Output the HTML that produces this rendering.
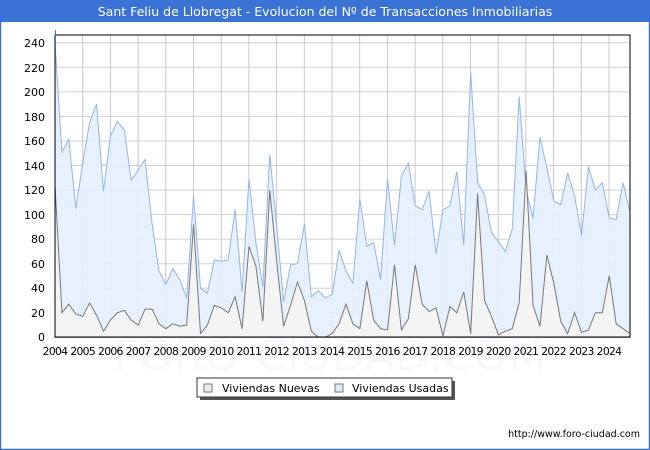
<!DOCTYPE html>
<html><head><meta charset="utf-8"><style>
body{margin:0;width:650px;height:450px;overflow:hidden;background:#fff;font-family:"DejaVu Sans","Liberation Sans",sans-serif}
</style></head><body>
<svg width="650" height="450" xmlns="http://www.w3.org/2000/svg" style="position:absolute;left:0;top:0">
<rect x="0" y="0" width="650" height="450" fill="#fff"/>
<rect x="0.5" y="0.5" width="649" height="449" fill="none" stroke="#3a6fd0" stroke-width="1.5"/>
<rect x="0" y="0" width="650" height="22" fill="#3a72d6"/>
<text x="325" y="16" text-anchor="middle" font-size="12.5" fill="#fff" font-family="DejaVu Sans, Liberation Sans, sans-serif">Sant Feliu de Llobregat - Evolucion del Nº de Transacciones Inmobiliarias</text>
<text x="330" y="370" text-anchor="middle" font-size="44" fill="#f6f8fc" font-family="DejaVu Sans, sans-serif">FORO-CIUDAD.COM</text>
<g stroke="#d0d0d0" stroke-width="1">
<line x1="55" x2="630" y1="312.8" y2="312.8"/><line x1="55" x2="630" y1="288.2" y2="288.2"/><line x1="55" x2="630" y1="263.7" y2="263.7"/><line x1="55" x2="630" y1="239.1" y2="239.1"/><line x1="55" x2="630" y1="214.6" y2="214.6"/><line x1="55" x2="630" y1="190.1" y2="190.1"/><line x1="55" x2="630" y1="165.5" y2="165.5"/><line x1="55" x2="630" y1="141" y2="141"/><line x1="55" x2="630" y1="116.4" y2="116.4"/><line x1="55" x2="630" y1="91.9" y2="91.9"/><line x1="55" x2="630" y1="67.3" y2="67.3"/><line x1="55" x2="630" y1="42.8" y2="42.8"/>
</g>
<g stroke="#c8c8c8" stroke-width="1">
<line x1="82.7" x2="82.7" y1="35" y2="337"/><line x1="110.4" x2="110.4" y1="35" y2="337"/><line x1="138.1" x2="138.1" y1="35" y2="337"/><line x1="165.8" x2="165.8" y1="35" y2="337"/><line x1="193.5" x2="193.5" y1="35" y2="337"/><line x1="221.2" x2="221.2" y1="35" y2="337"/><line x1="248.9" x2="248.9" y1="35" y2="337"/><line x1="276.6" x2="276.6" y1="35" y2="337"/><line x1="304.3" x2="304.3" y1="35" y2="337"/><line x1="332" x2="332" y1="35" y2="337"/><line x1="359.7" x2="359.7" y1="35" y2="337"/><line x1="387.4" x2="387.4" y1="35" y2="337"/><line x1="415.1" x2="415.1" y1="35" y2="337"/><line x1="442.8" x2="442.8" y1="35" y2="337"/><line x1="470.5" x2="470.5" y1="35" y2="337"/><line x1="498.2" x2="498.2" y1="35" y2="337"/><line x1="525.9" x2="525.9" y1="35" y2="337"/><line x1="553.6" x2="553.6" y1="35" y2="337"/><line x1="581.3" x2="581.3" y1="35" y2="337"/><line x1="609" x2="609" y1="35" y2="337"/>
</g>
<g transform="translate(55,337.3) scale(6.928,-1.2275)">
<polygon fill="#e3f0fd" fill-opacity="0.9" stroke="#94b4e8" stroke-width="1" vector-effect="non-scaling-stroke" points="0,0 0,240 1,151 2,161 3,105 4,142 5,175 6,190 7,119 8,164 9,176 10,169 11,128 12,136 13,145 14,93 15,54 16,43 17,56 18,47 19,32 20,115 21,40 22,36 23,63 24,62 25,63 26,104 27,37 28,129 29,77 30,41 31,149 32,90 33,29 34,59 35,60 36,92 37,33 38,38 39,32 40,35 41,71 42,54 43,44 44,113 45,74 46,77 47,47 48,129 49,75 50,131 51,142 52,107 53,104 54,119 55,68 56,104 57,107 58,135 59,75 60,216 61,126 62,116 63,85 64,78 65,70 66,88 67,196 68,120 69,97 70,163 71,138 72,111 73,108 74,134 75,115 76,83 77,139 78,120 79,126 80,97 81,96 82,126 83,102 83,0"/>
<polygon fill="#f4f4f4" stroke="#777" stroke-width="1" vector-effect="non-scaling-stroke" points="0,0 0,124 1,20 2,27 3,19 4,17 5,28 6,18 7,5 8,14 9,20 10,22 11,14 12,10 13,23 14,23 15,11 16,7 17,11 18,9 19,10 20,92 21,3 22,10 23,26 24,24 25,20 26,33 27,7 28,74 29,58 30,13 31,120 32,62 33,9 34,26 35,45 36,30 37,5 38,0 39,0 40,3 41,11 42,27 43,11 44,7 45,46 46,14 47,7 48,6 49,59 50,6 51,15 52,59 53,27 54,21 55,24 56,1 57,25 58,20 59,37 60,3 61,117 62,30 63,17 64,2 65,5 66,7 67,28 68,136 69,26 70,9 71,67 72,44 73,13 74,3 75,20 76,4 77,6 78,20 79,20 80,50 81,11 82,7 83,3 83,0"/>
</g>
<rect x="55" y="35" width="575" height="302" fill="none" stroke="#000" stroke-width="1"/>
<line x1="55.5" y1="30" x2="55.5" y2="45" stroke="#3a72d6" stroke-width="1"/>
<g font-size="11" fill="#000" text-anchor="end" font-family="DejaVu Sans, Liberation Sans, sans-serif">
<text x="45" y="341">0</text><text x="45" y="317">20</text><text x="45" y="292">40</text><text x="45" y="268">60</text><text x="45" y="243">80</text><text x="45" y="219">100</text><text x="45" y="194">120</text><text x="45" y="170">140</text><text x="45" y="145">160</text><text x="45" y="121">180</text><text x="45" y="96">200</text><text x="45" y="72">220</text><text x="45" y="47">240</text>
</g>
<g font-size="10.8" fill="#000" text-anchor="middle" font-family="DejaVu Sans, Liberation Sans, sans-serif" letter-spacing="-0.7">
<text x="55" y="355">2004</text><text x="82.7" y="355">2005</text><text x="110.4" y="355">2006</text><text x="138.1" y="355">2007</text><text x="165.8" y="355">2008</text><text x="193.5" y="355">2009</text><text x="221.2" y="355">2010</text><text x="248.9" y="355">2011</text><text x="276.6" y="355">2012</text><text x="304.3" y="355">2013</text><text x="332" y="355">2014</text><text x="359.7" y="355">2015</text><text x="387.4" y="355">2016</text><text x="415.1" y="355">2017</text><text x="442.8" y="355">2018</text><text x="470.5" y="355">2019</text><text x="498.2" y="355">2020</text><text x="525.9" y="355">2021</text><text x="553.6" y="355">2022</text><text x="581.3" y="355">2023</text><text x="609" y="355">2024</text>
</g>
<rect x="200" y="381" width="255" height="19" fill="#555"/>
<rect x="197" y="378" width="255" height="19" fill="#fff" stroke="#333" stroke-width="1"/>
<rect x="204" y="384" width="8" height="8" fill="#eee" stroke="#777"/>
<text x="222" y="392" font-size="11" fill="#000">Viviendas Nuevas</text>
<rect x="335" y="384" width="8" height="8" fill="#dceefe" stroke="#777"/>
<text x="352" y="392" font-size="11" fill="#000">Viviendas Usadas</text>
<text x="640" y="437" text-anchor="end" font-size="9.5" fill="#000">http://www.foro-ciudad.com</text>
</svg>
</body></html>
